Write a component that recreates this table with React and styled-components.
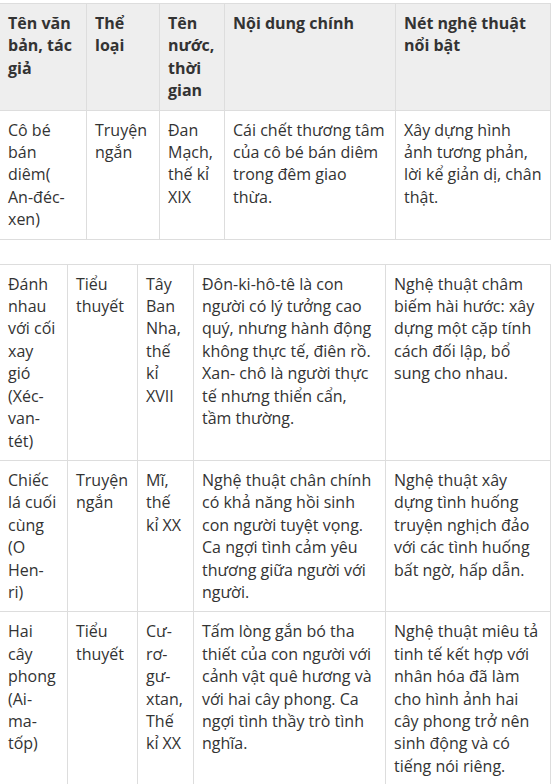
import React from "react";
import styled, { createGlobalStyle } from "styled-components";

const GlobalStyle = createGlobalStyle`
  html, body {
    margin: 0;
    padding: 0;
    background: #fff;
  }
  body {
    font-family: "Open Sans", "Noto Sans", sans-serif;
    font-size: 16px;
    color: #333;
  }
`;

const Page = styled.div`
  padding-top: 3px;
  margin-left: -1px;
  width: 552px;
`;

const Table = styled.table`
  width: 100%;
  table-layout: fixed;
  border-collapse: collapse;
  margin-bottom: ${(props) => props.gap || 0}px;
`;

const Th = styled.th`
  background: #eeeeee;
  border: 1px solid #dddddd;
  padding: 8px;
  text-align: left;
  vertical-align: top;
  font-weight: 700;
  line-height: 22.4px;
`;

const Td = styled.td`
  border: 1px solid #dddddd;
  padding: 8px;
  vertical-align: top;
  line-height: 22.4px;
  word-wrap: break-word;
`;

const headers = [
  "Tên văn bản, tác giả",
  "Thể loại",
  "Tên nước, thời gian",
  "Nội dung chính",
  "Nét nghệ thuật nổi bật",
];

const firstRows = [
  [
    "Cô bé bán diêm( An-đéc-xen)",
    "Truyện ngắn",
    "Đan Mạch, thế kỉ XIX",
    "Cái chết thương tâm của cô bé bán diêm trong đêm giao thừa.",
    "Xây dựng hình ảnh tương phản, lời kể giản dị, chân thật.",
  ],
];

const secondRows = [
  [
    "Đánh nhau với cối xay gió (Xéc-van-tét)",
    "Tiểu thuyết",
    "Tây Ban Nha, thế kỉ XVII",
    "Đôn-ki-hô-tê là con người có lý tưởng cao quý, nhưng hành động không thực tế, điên rồ. Xan- chô là người thực tế nhưng thiển cẩn, tầm thường.",
    "Nghệ thuật châm biếm hài hước: xây dựng một cặp tính cách đối lập, bổ sung cho nhau.",
  ],
  [
    "Chiếc lá cuối cùng (O Hen-ri)",
    "Truyện ngắn",
    "Mĩ, thế kỉ XX",
    "Nghệ thuật chân chính có khả năng hồi sinh con người tuyệt vọng. Ca ngợi tình cảm yêu thương giữa người với người.",
    "Nghệ thuật xây dựng tình huống truyện nghịch đảo với các tình huống bất ngờ, hấp dẫn.",
  ],
  [
    "Hai cây phong (Ai-ma-tốp)",
    "Tiểu thuyết",
    "Cư-rơ-gư-xtan, Thế kỉ XX",
    "Tấm lòng gắn bó tha thiết của con người với cảnh vật quê hương và với hai cây phong. Ca ngợi tình thầy trò tình nghĩa.",
    "Nghệ thuật miêu tả tinh tế kết hợp với nhân hóa đã làm cho hình ảnh hai cây phong trở nên sinh động và có tiếng nói riêng.",
  ],
];

function Cols({ widths }) {
  return (
    <colgroup>
      {widths.map((w, i) => (
        <col key={i} style={{ width: w }} />
      ))}
    </colgroup>
  );
}

export default function App() {
  return (
    <Page>
      <GlobalStyle />
      <Table gap={24}>
        <Cols widths={[87, 73, 65, 171, 155]} />
        <thead>
          <tr>
            {headers.map((h, i) => (
              <Th key={i}>{h}</Th>
            ))}
          </tr>
        </thead>
        <tbody>
          {firstRows.map((row, r) => (
            <tr key={r}>
              {row.map((c, i) => (
                <Td key={i}>{c}</Td>
              ))}
            </tr>
          ))}
        </tbody>
      </Table>
      <Table>
        <Cols widths={[68, 70, 56, 192, 165]} />
        <tbody>
          {secondRows.map((row, r) => (
            <tr key={r}>
              {row.map((c, i) => (
                <Td key={i}>{c}</Td>
              ))}
            </tr>
          ))}
        </tbody>
      </Table>
    </Page>
  );
}
